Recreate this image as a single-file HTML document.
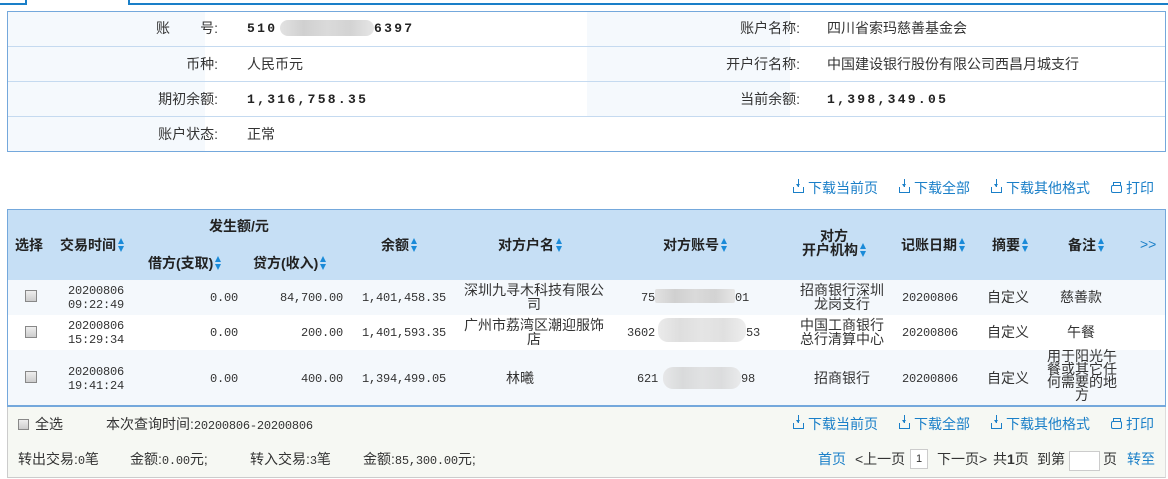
<!DOCTYPE html>
<html><head><meta charset="utf-8"><style>
*{margin:0;padding:0;box-sizing:border-box}
body{width:1168px;height:479px;background:#fff;font-family:"Liberation Sans","Noto Sans CJK SC",sans-serif;font-size:14px;color:#333;position:relative;overflow:hidden}
.a{position:absolute;white-space:nowrap;line-height:16px}
.ln{position:absolute;background:#1a7fc8}
.mono{font-family:"Liberation Mono","Noto Sans CJK SC",monospace}
.b{font-weight:bold;letter-spacing:2.3px;font-size:13px;color:#222}
.n{font-size:12px;letter-spacing:-0.2px;color:#333}
.blue{color:#1a7fc8}
.blur{position:absolute;height:16px;border-radius:8px;background:linear-gradient(90deg,#e2e2e2,#d0d0d0,#dadada,#d3d3d3,#e6e6e6)}
.cb{position:absolute;width:12px;height:12px;border:1px solid #888;background:linear-gradient(#eee,#ccc)}
.h{position:absolute;font-weight:bold;color:#222;white-space:nowrap;line-height:16px}
.s{display:inline-block;width:7px;height:14px;vertical-align:-2px;margin-left:2px;position:relative}
.s:before{content:"";position:absolute;left:0;top:0;border:3.5px solid transparent;border-bottom:6px solid #1a8ad8;border-top:0}
.s:after{content:"";position:absolute;left:0;top:8px;border:3.5px solid transparent;border-top:6px solid #1a8ad8;border-bottom:0}
.c{position:absolute;text-align:center;line-height:14px;white-space:normal}
.dl{position:absolute;color:#1a7fc8;white-space:nowrap;line-height:16px}
.ic{display:inline-block;width:11px;height:6px;border:1.5px solid #1a7fc8;border-top:0;margin-right:4px;vertical-align:0;position:relative}
.ic:before{content:"";position:absolute;left:3.5px;top:-8px;width:1.5px;height:8px;background:#1a7fc8}
.ic:after{content:"";position:absolute;left:1.5px;top:-3px;border:2.7px solid transparent;border-top:3px solid #1a7fc8;border-bottom:0}
.pr{display:inline-block;width:11px;height:8px;border:1.5px solid #1a7fc8;border-radius:2px;margin-right:4px;vertical-align:0;position:relative}
.pr:before{content:"";position:absolute;left:1px;top:-4px;width:6px;height:3px;border:1.5px solid #1a7fc8;border-bottom:0}
</style></head><body>
<div class="ln" style="left:0;top:3px;width:27px;height:2px"></div>
<div class="ln" style="left:25px;top:0;width:2px;height:5px"></div>
<div class="ln" style="left:128px;top:0;width:2px;height:5px"></div>
<div class="ln" style="left:128px;top:3px;width:1040px;height:2px"></div>

<div style="position:absolute;left:7px;top:11px;width:1159px;height:141px;border:1px solid #74a8dc"></div>
<div style="position:absolute;left:8px;top:12px;width:197px;height:139px;background:#f5f9fd"></div>
<div style="position:absolute;left:587px;top:12px;width:203px;height:104px;background:#f5f9fd"></div>
<div style="position:absolute;left:8px;top:46px;width:1157px;height:1px;background:#c5daf0"></div>
<div style="position:absolute;left:8px;top:81px;width:1157px;height:1px;background:#c5daf0"></div>
<div style="position:absolute;left:8px;top:116px;width:1157px;height:1px;background:#c5daf0"></div>
<div class="a" style="left:156px;top:20px">账</div><div class="a" style="right:950px;top:20px">号:</div>
<div class="a" style="right:950px;top:56px">币种:</div>
<div class="a" style="right:950px;top:91px">期初余额:</div>
<div class="a" style="right:950px;top:126px">账户状态:</div>
<div class="a mono b" style="left:247px;top:21px">510</div>
<div class="blur" style="left:280px;top:20px;width:94px"></div>
<div class="a mono b" style="left:374px;top:21px">6397</div>
<div class="a" style="left:247px;top:56px">人民币元</div>
<div class="a mono b" style="left:247px;top:92px">1,316,758.35</div>
<div class="a" style="left:247px;top:126px">正常</div>
<div class="a" style="right:368px;top:20px">账户名称:</div>
<div class="a" style="right:368px;top:56px">开户行名称:</div>
<div class="a" style="right:368px;top:91px">当前余额:</div>
<div class="a" style="left:827px;top:20px">四川省索玛慈善基金会</div>
<div class="a" style="left:827px;top:56px">中国建设银行股份有限公司西昌月城支行</div>
<div class="a mono b" style="left:827px;top:92px">1,398,349.05</div>

<div class="dl" style="left:793px;top:180px"><span class="ic"></span>下载当前页</div>
<div class="dl" style="left:899px;top:180px"><span class="ic"></span>下载全部</div>
<div class="dl" style="left:991px;top:180px"><span class="ic"></span>下载其他格式</div>
<div class="dl" style="left:1111px;top:180px"><span class="pr"></span>打印</div>

<div style="position:absolute;left:7px;top:209px;width:1159px;height:198px;border:1px solid #74a8dc;border-bottom:2px solid #74a8dc"></div>
<div style="position:absolute;left:8px;top:210px;width:1157px;height:70px;background:#c6dff5"></div>
<div style="position:absolute;left:8px;top:280px;width:1157px;height:35px;background:#f4f8fc"></div>
<div style="position:absolute;left:8px;top:350px;width:1157px;height:55px;background:#f4f8fc"></div>
<div class="h" style="left:15px;top:237px">选择</div>
<div class="h" style="left:60px;top:237px">交易时间<span class="s"></span></div>
<div class="h" style="left:209px;top:218px">发生额/元</div>
<div class="h" style="left:148px;top:255px">借方(支取)<span class="s"></span></div>
<div class="h" style="left:253px;top:255px">贷方(收入)<span class="s"></span></div>
<div class="h" style="left:381px;top:237px">余额<span class="s"></span></div>
<div class="h" style="left:498px;top:237px">对方户名<span class="s"></span></div>
<div class="h" style="left:663px;top:237px">对方账号<span class="s"></span></div>
<div class="h" style="left:820px;top:229px;line-height:14px">对方</div>
<div class="h" style="left:802px;top:243px;line-height:14px">开户机构<span class="s"></span></div>
<div class="h" style="left:901px;top:237px">记账日期<span class="s"></span></div>
<div class="h" style="left:992px;top:237px">摘要<span class="s"></span></div>
<div class="h" style="left:1068px;top:237px">备注<span class="s"></span></div>
<div class="a blue" style="left:1140px;top:236px">&gt;&gt;</div>

<div class="cb" style="left:25px;top:290px"></div>
<div class="cb" style="left:25px;top:326px"></div>
<div class="cb" style="left:25px;top:371px"></div>
<div class="c mono n" style="left:56px;top:284px;width:80px">20200806<br>09:22:49</div>
<div class="c mono n" style="left:56px;top:319px;width:80px">20200806<br>15:29:34</div>
<div class="c mono n" style="left:56px;top:365px;width:80px">20200806<br>19:41:24</div>
<div class="a mono n" style="right:930px;top:290px">0.00</div>
<div class="a mono n" style="right:930px;top:325px">0.00</div>
<div class="a mono n" style="right:930px;top:371px">0.00</div>
<div class="a mono n" style="right:825px;top:290px">84,700.00</div>
<div class="a mono n" style="right:825px;top:325px">200.00</div>
<div class="a mono n" style="right:825px;top:371px">400.00</div>
<div class="a mono n" style="right:722px;top:290px">1,401,458.35</div>
<div class="a mono n" style="right:722px;top:325px">1,401,593.35</div>
<div class="a mono n" style="right:722px;top:371px">1,394,499.05</div>
<div class="c" style="left:461px;top:283px;width:146px">深圳九寻木科技有限公司</div>
<div class="c" style="left:461px;top:318px;width:146px">广州市荔湾区潮迎服饰店</div>
<div class="c" style="left:461px;top:371px;width:118px">林曦</div>
<div class="a mono n" style="left:641px;top:290px">75</div><div class="blur" style="left:655px;top:289px;width:80px;height:14px;border-radius:2px"></div><div class="a mono n" style="left:735px;top:290px">01</div>
<div class="a mono n" style="left:627px;top:325px">3602</div><div class="blur" style="left:658px;top:318px;width:88px;height:24px;border-radius:10px;opacity:.7"></div><div class="a mono n" style="left:746px;top:325px">53</div>
<div class="a mono n" style="left:637px;top:371px">621</div><div class="blur" style="left:663px;top:367px;width:78px;height:22px;border-radius:10px;opacity:.75"></div><div class="a mono n" style="left:741px;top:371px">98</div>
<div class="c" style="left:798px;top:283px;width:88px">招商银行深圳龙岗支行</div>
<div class="c" style="left:798px;top:318px;width:88px">中国工商银行总行清算中心</div>
<div class="c" style="left:798px;top:371px;width:88px">招商银行</div>
<div class="a mono n" style="left:902px;top:290px">20200806</div>
<div class="a mono n" style="left:902px;top:325px">20200806</div>
<div class="a mono n" style="left:902px;top:371px">20200806</div>
<div class="a" style="left:987px;top:289px">自定义</div>
<div class="a" style="left:987px;top:324px">自定义</div>
<div class="a" style="left:987px;top:370px">自定义</div>
<div class="c" style="left:1045px;top:290px;width:72px">慈善款</div>
<div class="c" style="left:1045px;top:325px;width:72px">午餐</div>
<div class="c" style="left:1046px;top:350px;width:72px;line-height:13px">用于阳光午餐或其它任何需要的地方</div>

<div style="position:absolute;left:7px;top:407px;width:1159px;height:71px;background:#f6f8f3;border-left:1px solid #ccc;border-bottom:1px solid #ccc;border-right:1px solid #ddd"></div>
<div class="cb" style="left:18px;top:419px;width:11px;height:11px"></div>
<div class="a" style="left:35px;top:416px">全选</div>
<div class="a" style="left:106px;top:416px">本次查询时间:<span class="mono n">20200806-20200806</span></div>
<div class="dl" style="left:793px;top:416px"><span class="ic"></span>下载当前页</div>
<div class="dl" style="left:899px;top:416px"><span class="ic"></span>下载全部</div>
<div class="dl" style="left:991px;top:416px"><span class="ic"></span>下载其他格式</div>
<div class="dl" style="left:1111px;top:416px"><span class="pr"></span>打印</div>
<div class="a" style="left:18px;top:451px">转出交易:<span class="mono n">0</span>笔</div>
<div class="a" style="left:130px;top:451px">金额:<span class="mono n">0.00</span>元;</div>
<div class="a" style="left:250px;top:451px">转入交易:<span class="mono n">3</span>笔</div>
<div class="a" style="left:363px;top:451px">金额:<span class="mono n">85,300.00</span>元;</div>
<div class="a blue" style="left:818px;top:451px">首页</div>
<div class="a" style="left:855px;top:451px">&lt;上一页</div>
<div style="position:absolute;left:910px;top:449px;width:18px;height:20px;border:1px solid #ccc;background:#fff;text-align:center;font-size:11px;line-height:18px">1</div>
<div class="a" style="left:937px;top:451px">下一页&gt;</div>
<div class="a" style="left:993px;top:451px">共<b>1</b>页</div>
<div class="a" style="left:1037px;top:451px">到第</div>
<div style="position:absolute;left:1069px;top:451px;width:31px;height:20px;border:1px solid #ccc;background:#fff"></div>
<div class="a" style="left:1103px;top:451px">页</div>
<div class="a blue" style="left:1127px;top:451px">转至</div>
</body></html>
